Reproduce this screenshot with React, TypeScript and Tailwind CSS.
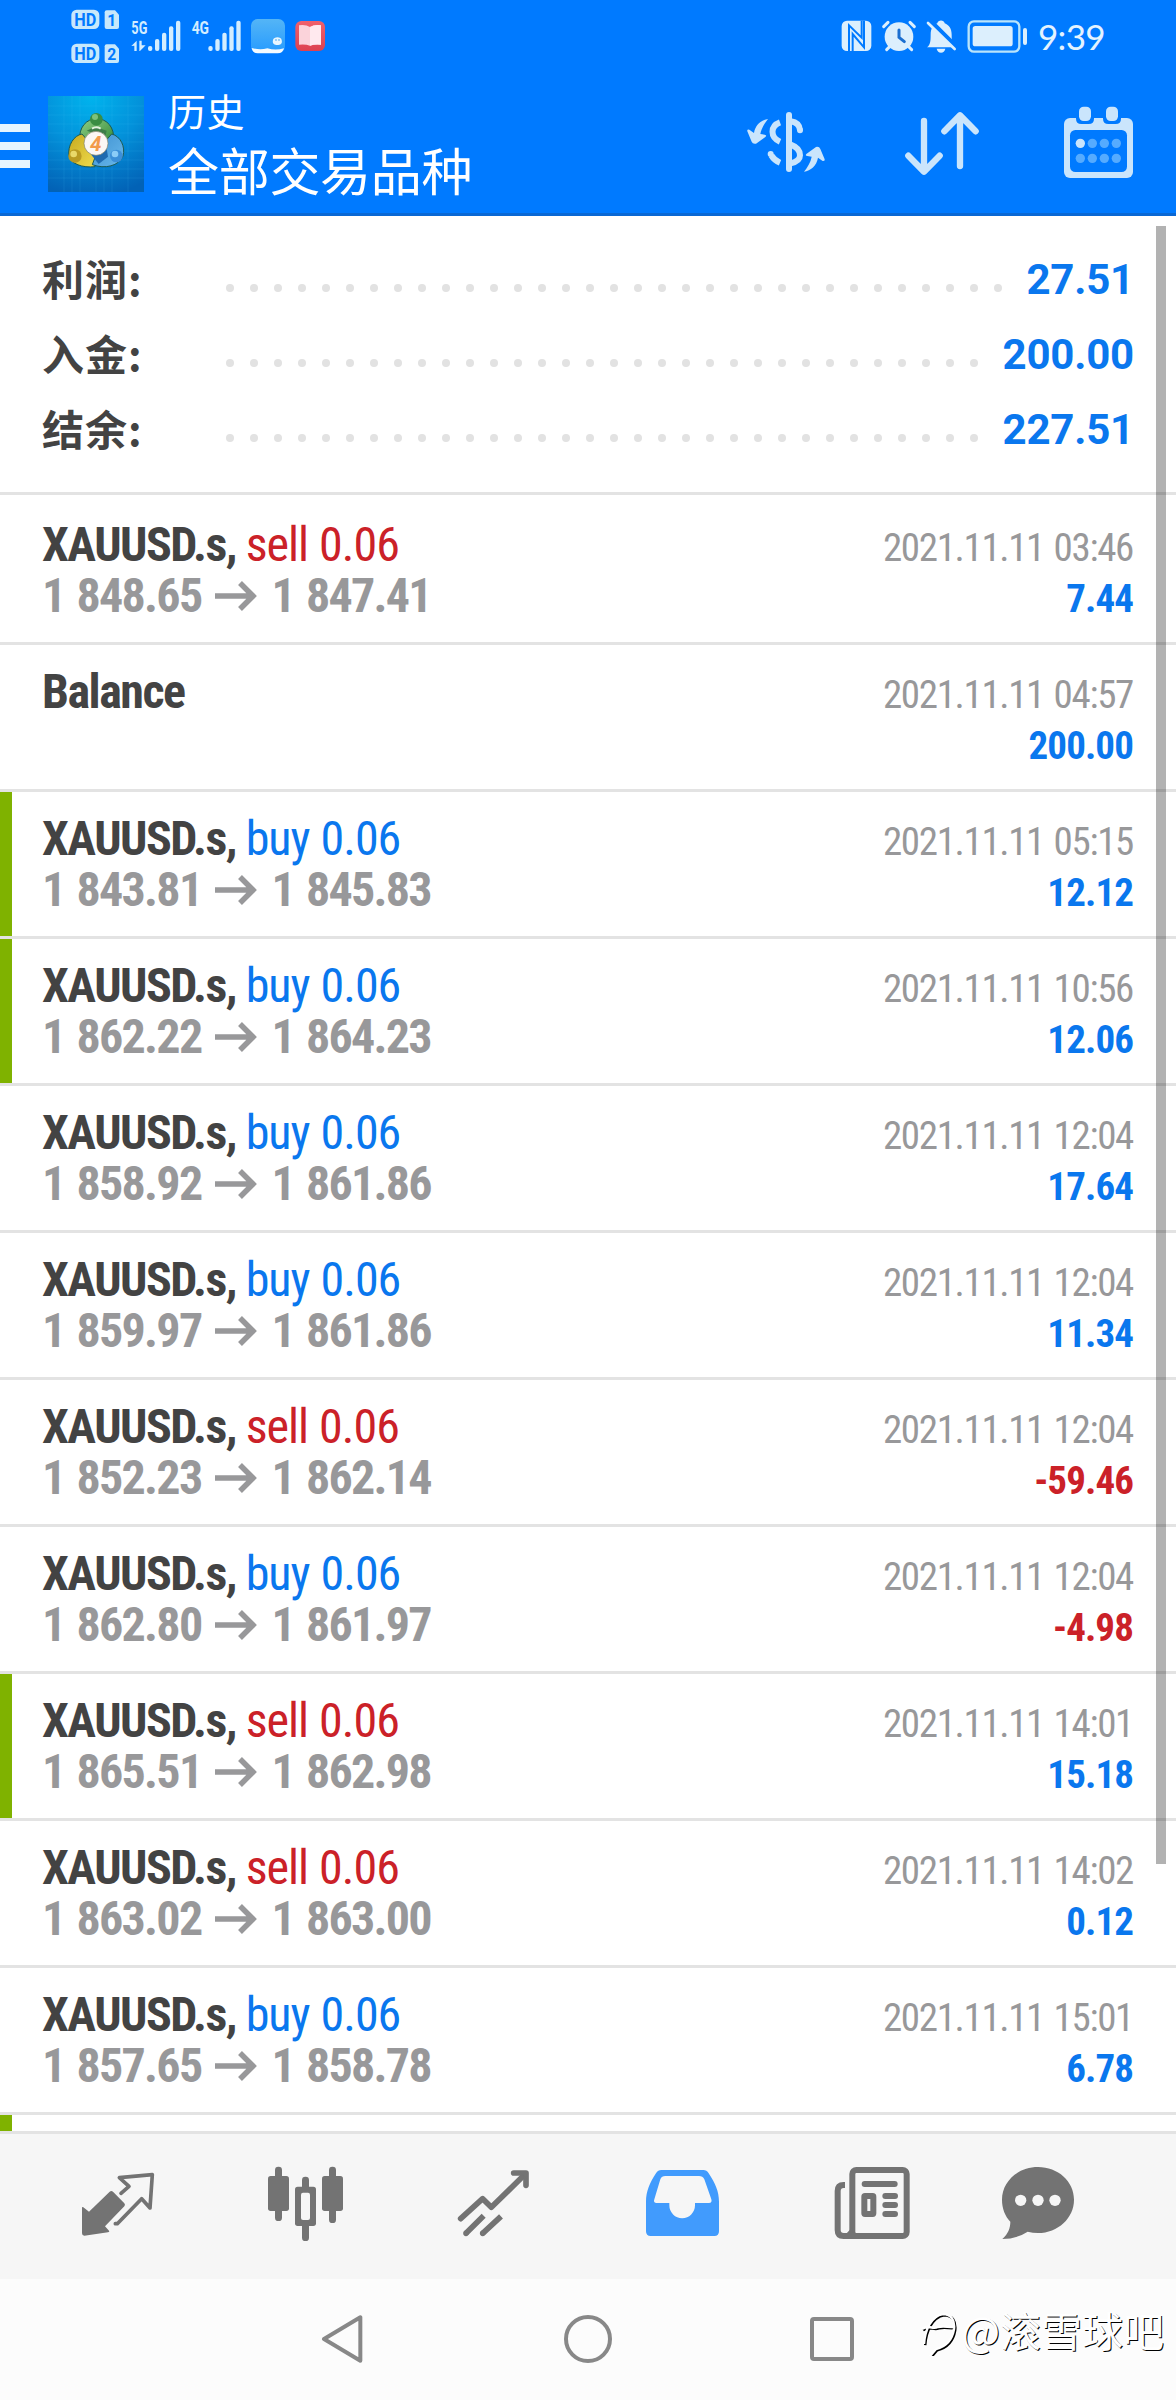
import { useState } from "react";
import clsx from "clsx";

interface Deal {
  symbol: string;
  side?: "buy" | "sell";
  volume?: string;
  open?: string;
  close?: string;
  time: string;
  profit: string;
  marked?: boolean;
}

const DEALS: Deal[] = [
  { symbol: "XAUUSD.s", side: "sell", volume: "0.06", open: "1 848.65", close: "1 847.41", time: "2021.11.11 03:46", profit: "7.44" },
  { symbol: "Balance", time: "2021.11.11 04:57", profit: "200.00" },
  { symbol: "XAUUSD.s", side: "buy", volume: "0.06", open: "1 843.81", close: "1 845.83", time: "2021.11.11 05:15", profit: "12.12", marked: true },
  { symbol: "XAUUSD.s", side: "buy", volume: "0.06", open: "1 862.22", close: "1 864.23", time: "2021.11.11 10:56", profit: "12.06", marked: true },
  { symbol: "XAUUSD.s", side: "buy", volume: "0.06", open: "1 858.92", close: "1 861.86", time: "2021.11.11 12:04", profit: "17.64" },
  { symbol: "XAUUSD.s", side: "buy", volume: "0.06", open: "1 859.97", close: "1 861.86", time: "2021.11.11 12:04", profit: "11.34" },
  { symbol: "XAUUSD.s", side: "sell", volume: "0.06", open: "1 852.23", close: "1 862.14", time: "2021.11.11 12:04", profit: "-59.46" },
  { symbol: "XAUUSD.s", side: "buy", volume: "0.06", open: "1 862.80", close: "1 861.97", time: "2021.11.11 12:04", profit: "-4.98" },
  { symbol: "XAUUSD.s", side: "sell", volume: "0.06", open: "1 865.51", close: "1 862.98", time: "2021.11.11 14:01", profit: "15.18", marked: true },
  { symbol: "XAUUSD.s", side: "sell", volume: "0.06", open: "1 863.02", close: "1 863.00", time: "2021.11.11 14:02", profit: "0.12" },
  { symbol: "XAUUSD.s", side: "buy", volume: "0.06", open: "1 857.65", close: "1 858.78", time: "2021.11.11 15:01", profit: "6.78" },
];

const SUMMARY = [
  { label: "利润:", value: "27.51", dots: 33 },
  { label: "入金:", value: "200.00", dots: 32 },
  { label: "结余:", value: "227.51", dots: 32 },
];

function SimBadges() {
  return (
    <svg className="h-[72px] w-[330px]" viewBox="0 0 990 216">
      {[0, 102].map((y, i) => (
        <g key={y}>
          <rect x="214" y={29 + y} width="84" height="58" rx="16" fill="#c8e8fb" />
          <text x="223" y={77 + y} textLength="66" lengthAdjust="spacingAndGlyphs" fontFamily="Roboto" fontWeight="700" fontSize="54" fill="#007aff">HD</text>
          <path d={`M320 ${31 + y}h25l12 13v37q0 6-6 6h-31q-6 0-6-6v-44q0-6 6-6z`} fill="#c8e8fb" />
          <text x="335" y={77 + y} textAnchor="middle" fontFamily="Roboto" fontWeight="700" fontSize="47" fill="#007aff">{i + 1}</text>
        </g>
      ))}
      <g fill="#d3edff">
        <text x="394" y="103" textLength="48" lengthAdjust="spacingAndGlyphs" fontFamily="Roboto" fontWeight="700" fontSize="56">5G</text>
        <text x="575" y="103" textLength="52" lengthAdjust="spacingAndGlyphs" fontFamily="Roboto" fontWeight="700" fontSize="56">4G</text>
        <path d="M394 138 410 122v31h-7v-16zM418 122h7v14h12l-17 17h-2z" />
        {[444, 625].map((x) => (
          <g key={x}>
            <rect x={x} y="138" width="13" height="15" rx="6" />
            <rect x={x + 21} y="117" width="13" height="36" rx="6" />
            <rect x={x + 42} y="98" width="13" height="55" rx="6" />
            <rect x={x + 63} y="79" width="13" height="74" rx="6" />
            <rect x={x + 84} y="62" width="13" height="91" rx="6" />
          </g>
        ))}
      </g>
      <defs>
        <linearGradient id="cloud" x1="0" y1="0" x2="0" y2="1">
          <stop offset="0" stopColor="#54b5f6" />
          <stop offset="1" stopColor="#269bff" />
        </linearGradient>
        <linearGradient id="book" x1="0" y1="0" x2="0" y2="1">
          <stop offset="0" stopColor="#f0606c" />
          <stop offset="1" stopColor="#dd4150" />
        </linearGradient>
      </defs>
      <rect x="753" y="57" width="102" height="102" rx="20" fill="url(#cloud)" />
      <path d="M755 144q25 7 47 1 25 7 50 0-3 15-19 15h-60q-15 0-18-16z" fill="#f4faff" />
      <path d="M819 120c2-11 25-11 26 0 3 12-4 15-13 15-8 0-16-3-13-15z" fill="#e8f6ff" />
      <circle cx="828" cy="120" r="2.5" fill="#3aa0ee" />
      <circle cx="837" cy="120" r="2.5" fill="#3aa0ee" />
      <rect x="886" y="63" width="89" height="90" rx="18" fill="url(#book)" />
      <path d="M897 76q20-3 33 5 13-8 33-5v58q-20-2-33 3-13-5-33-3z" fill="#fbd3da" />
      <path d="M930 81q13-8 33-5v58q-20-2-33 3z" fill="#ffe9ee" />
    </svg>
  );
}

function StatusIcons() {
  return (
    <svg className="h-[72px] w-[190px]" viewBox="360 0 570 216">
      <g fill="#dceffd">
        <rect x="365" y="62" width="89" height="91" rx="16" />
        <path d="M387 153V76L425 113V62M398 153V102L432 142V62" fill="none" stroke="#007aff" strokeWidth="6" />
        <circle cx="537" cy="110" r="43" />
        <path d="m491 80 13-13M570 67l13 13M500 149l9-9M575 149l-9-9" stroke="#dceffd" strokeWidth="9" strokeLinecap="round" />
        <path d="M537 90v22l16 13" fill="none" stroke="#1c6fd0" strokeWidth="9" strokeLinecap="round" />
        <path d="M621 142c10-8 11-18 11-38 0-18 7-29 20-34 2-11 20-11 22 0 13 5 21 16 21 34 0 20 1 30 11 38z" />
        <path d="M650 146h26q-3 12-13 12t-13-12z" />
        <path d="m622 54 92 92" stroke="#007aff" strokeWidth="14" />
        <path d="m624 69 80 78" stroke="#dceffd" strokeWidth="8" strokeLinecap="round" />
        <rect x="746" y="64" width="152" height="91" rx="16" fill="none" stroke="#b9e4fb" strokeWidth="7" />
        <rect x="758" y="78" width="120" height="61" rx="8" />
        <rect x="909" y="84" width="12" height="51" rx="6" />
      </g>
    </svg>
  );
}

function Logo() {
  return (
    <svg className="size-24" viewBox="144 288 288 288">
      <defs>
        <radialGradient id="sky" cx="0.45" cy="0" r="1.05">
          <stop offset="0" stopColor="#00b4ee" />
          <stop offset="0.5" stopColor="#0391da" />
          <stop offset="1" stopColor="#0262b6" />
        </radialGradient>
        <linearGradient id="green" x1="0" y1="0" x2="1" y2="1">
          <stop offset="0" stopColor="#8fcf86" />
          <stop offset="1" stopColor="#2c8431" />
        </linearGradient>
        <linearGradient id="gold" x1="0" y1="0" x2="1" y2="1">
          <stop offset="0" stopColor="#c7a91f" />
          <stop offset="1" stopColor="#f0dc4c" />
        </linearGradient>
        <linearGradient id="blue" x1="0" y1="0" x2="1" y2="1">
          <stop offset="0" stopColor="#3d8fd0" />
          <stop offset="1" stopColor="#69b9ec" />
        </linearGradient>
      </defs>
      <path d="M144 288h288v288H144z" fill="url(#sky)" />
      <path
        d="M144 318h288M144 345h288M144 372h288M144 399h288M144 426h288M144 453h288M144 480h288M144 507h288M144 534h288M192 288v288M216 288v288M240 288v288M288 288v288M312 288v288M336 288v288M384 288v288"
        stroke="#5cc4ff"
        strokeOpacity="0.12"
        strokeWidth="3"
      />
      <g stroke="#1d5a50" strokeWidth="3">
        <path d="M240 424c-6-42 20-68 50-68s56 26 50 68l-16 20h-68z" fill="url(#green)" />
        <path d="M246 402c-24 4-44 34-39 66 6 24 40 36 78 32l3-50z" fill="url(#gold)" />
        <path d="M335 402c26 6 42 38 34 66-12 30-54 40-92 26l16-44z" fill="url(#blue)" />
        <path d="m272 462 24 30 28-22-4-24z" fill="#1f6aaf" stroke="none" />
        <path d="m260 392 26-12 34 12-4 18z" fill="#3d7d48" stroke="none" />
      </g>
      <circle cx="289" cy="358" r="19" fill="#3a8d43" />
      <circle cx="285" cy="351" r="9" fill="#7cc17b" />
      <path d="M276 386q12-8 26 0" stroke="#e2f2df" strokeWidth="6" fill="none" />
      <circle cx="225" cy="468" r="20" fill="#b99a22" />
      <circle cx="221" cy="462" r="10" fill="#e9d86a" />
      <circle cx="349" cy="468" r="19" fill="#3c8fd8" />
      <circle cx="345" cy="462" r="10" fill="#8bccf7" />
      <circle cx="288" cy="430" r="36" fill="#fbf7f4" stroke="#7b7f63" strokeWidth="2" />
      <text x="287" y="452" textAnchor="middle" fontFamily="Roboto" fontStyle="italic" fontWeight="700" fontSize="62" fill="#f29a4c">4</text>
    </svg>
  );
}

function CurrencyIcon() {
  const arrow = "M144 357C124 360 106 375 102 399L88 389Q80 388 82 394L95 425Q98 433 108 431L136 411Q142 406 134 404L121 402C124 385 134 370 144 357Z";
  return (
    <svg className="h-36 w-24" viewBox="54 216 288 432" fill="none" stroke="#cae5fc" strokeWidth="18">
      <path d="M207 345v162" strokeLinecap="round" />
      <path d="M180 367C150 378 150 412 180 425M180 488Q163 481 154 466" />
      <circle cx="152" cy="462" r="9" fill="#cae5fc" stroke="none" />
      <path d="M212 364Q238 368 240 390" />
      <circle cx="240" cy="391" r="9" fill="#cae5fc" stroke="none" />
      <path d="M212 434C231 441 240 452 240 466S230 486 212 490" />
      <path d={arrow} fill="#cae5fc" stroke="none" />
      <path d={arrow} fill="#cae5fc" stroke="none" transform="rotate(180 198 436)" />
    </svg>
  );
}

function SortIcon() {
  return (
    <svg className="h-36 w-24" viewBox="522 216 288 432" fill="none" stroke="#cae5fc" strokeWidth="19" strokeLinecap="round" strokeLinejoin="round">
      <path d="M612 363v150M565 467l47 48 47-48M720 498V348M673 394l47-48 47 48" />
    </svg>
  );
}

function CalendarIcon() {
  return (
    <svg className="h-36 w-24" viewBox="990 216 288 432">
      <rect x="1032" y="354" width="207" height="180" rx="18" fill="#cae5fc" />
      <rect x="1050" y="390" width="171" height="126" rx="16" fill="#007aff" />
      {[1077, 1158].map((x) => (
        <g key={x}>
          <path d={`M${x - 9} 352h54v4q0 16-16 16h-22q-16 0-16-16z`} fill="#007aff" />
          <rect x={x} y="320" width="36" height="43" rx="14" fill="#cae5fc" />
        </g>
      ))}
      {[430, 475].map((y) =>
        [1081, 1117, 1153, 1189].map((x) => (
          <circle key={`${x}-${y}`} cx={x} cy={y} r="14" fill={x === 1081 && y === 430 ? "#cae5fc" : "#55abff"} />
        ))
      )}
    </svg>
  );
}

const TABS = [
  {
    id: "quotes",
    viewBox: "72 162 564 435",
    icon: (
      <>
        <path d="M246 383q0-4 4-1l17 13 62-60q5-4 10 0l34 35q4 5 0 9l-58 60 12 13q3 4-3 5l-71 10q-7 0-7-7z" fill="currentColor" />
        <path d="M363 340 387 319 358 293 457 284 450 384 425 356 352 431H346" fill="none" stroke="currentColor" strokeWidth="11" strokeLinecap="round" strokeLinejoin="round" />
      </>
    ),
  },
  {
    id: "chart",
    viewBox: "636 162 564 435",
    icon: (
      <g fill="currentColor">
        <rect x="825" y="260" width="21" height="163" rx="10" />
        <rect x="804" y="288" width="63" height="105" rx="8" />
        <rect x="987" y="260" width="21" height="169" rx="10" />
        <rect x="966" y="288" width="63" height="105" rx="8" />
        <rect x="906" y="290" width="21" height="193" rx="10" />
        <rect x="885" y="320" width="63" height="118" rx="8" />
        <rect x="903" y="338" width="27" height="82" rx="6" fill="#f6f6f6" />
      </g>
    ),
  },
  {
    id: "trade",
    viewBox: "0 42 564 435",
    icon: (
      <g fill="none" stroke="currentColor" strokeWidth="17" strokeLinejoin="round">
        <path d="m182 296 66-60 26 26 98-96" strokeLinecap="round" />
        <path d="M341 159h37v37" strokeLinecap="round" />
        <path d="M360 155h24v24z" fill="currentColor" stroke="none" />
        <path d="m198 340 53-53M248 340l55-51" />
        <circle cx="198" cy="340" r="4" strokeWidth="9" />
        <circle cx="248" cy="340" r="4" strokeWidth="9" />
      </g>
    ),
  },
  {
    id: "history",
    viewBox: "564 42 564 435",
    icon: (
      <>
        <path d="M784 150H910Q920 150 926 160C946 190 957 215 957 245V334Q957 348 943 348H752Q738 348 738 334V245C738 215 749 188 768 160Q774 150 784 150Z" fill="currentColor" />
        <path d="M796 168H897Q908 168 913 178L934 238Q937 249 927 249H885V256A38 38 0 0 1 808 256V249H770Q759 249 763 238L781 178Q785 168 796 168Z" fill="#f6f6f6" />
      </>
    ),
  },
  {
    id: "news",
    viewBox: "-12 102 564 435",
    icon: (
      <g fill="none" stroke="currentColor" strokeWidth="18">
        <rect x="217" y="210" width="163" height="198" rx="12" />
        <path d="M195 255h-4q-18 0-18 18v117q0 18 18 18h40" />
        <path d="M200 400h18V380z" fill="currentColor" stroke="none" />
        <path d="M254 252h90M316 288h29M316 315h29M316 342h29" strokeLinecap="round" />
        <rect x="253" y="288" width="27" height="54" rx="2" />
      </g>
    ),
  },
  {
    id: "chat",
    viewBox: "552 102 564 435",
    icon: (
      <>
        <path d="M774 201c60 0 108 43 108 98s-48 100-108 100q-16 0-31-4-34 22-76 22c18-16 24-34 24-52-16-17-25-40-25-66 0-55 48-98 108-98z" fill="currentColor" />
        <g fill="#f6f6f6">
          <circle cx="722" cy="301" r="17" />
          <circle cx="774" cy="301" r="17" />
          <circle cx="825" cy="301" r="17" />
        </g>
      </>
    ),
  },
];

function SummaryRow({ label, value, dots }: { label: string; value: string; dots: number }) {
  return (
    <div className="flex h-[75px] items-center pr-[42px] pl-[42px]">
      <span className="-mt-[5px] w-[176px] text-[42px] leading-[75px] font-bold tracking-[1px] text-[#434343]">{label}</span>
      <div className="mt-[17px] flex">
        {Array.from({ length: dots }, (_, i) => (
          <span key={i} className="mx-2 size-2 rounded-full bg-[#e2e2e2]" />
        ))}
      </div>
      <span className="ml-auto font-[Roboto] text-[42px] leading-[75px] font-bold tracking-[-0.2px] text-[#0a77ee]">{value}</span>
    </div>
  );
}

function DealRow({ deal }: { deal: Deal }) {
  return (
    <div
      className={clsx(
        "flex h-[147px] shrink-0 justify-between border-b-[3px] border-[#e3e3e3] pr-[43px] font-['Roboto_Condensed',Roboto] leading-[51px] [font-stretch:75%] first:h-[150px] first:pt-[3px]",
        deal.marked ? "pl-0" : "pl-[42px]"
      )}
    >
      <div className="flex">
        {deal.marked && <div className="mr-[30px] w-3 bg-[#7fb200]" />}
        <div className="pt-[21px] text-[48px] font-bold tracking-[-1.5px] whitespace-nowrap">
          <p className="text-[#434343]">
            {deal.symbol}
            {deal.side && (
              <>
                ,{" "}
                <span className={clsx("font-normal tracking-[-1px] [word-spacing:1px]", deal.side === "buy" ? "text-[#0a77ee]" : "text-[#cb2128]")}>
                  {deal.side} {deal.volume}
                </span>
              </>
            )}
          </p>
          {deal.open && (
            <p className="flex items-center tracking-[-1.7px] text-[#98989a] [word-spacing:2.5px]">
              {deal.open}
              <svg className="mr-3.5 ml-[14px] h-[30px] w-[42px]" viewBox="0 0 42 30" fill="none" stroke="currentColor" strokeWidth="5.5">
                <path d="M0 15h38M25 2l13 13-13 13" />
              </svg>
              {deal.close}
            </p>
          )}
        </div>
      </div>
      <div className="pt-[25px] text-right text-[39px]">
        <p className="tracking-[-1.35px] text-[#98989a] [word-spacing:2px]">{deal.time}</p>
        <p className={clsx("font-bold tracking-[-0.9px]", deal.profit.startsWith("-") ? "text-[#cb2128]" : "text-[#0a77ee]")}>{deal.profit}</p>
      </div>
    </div>
  );
}

export default function App() {
  const [tab, setTab] = useState("history");

  return (
    <div className="relative flex h-[2400px] w-[1176px] flex-col overflow-hidden bg-white font-['Noto_Sans_CJK_SC',sans-serif]">
      <header className="h-[216px] shrink-0 border-b-[3px] border-[#0a68d4] bg-[#007aff] text-white">
        <div className="flex h-[72px] items-center">
          <SimBadges />
          <div className="mr-[71px] ml-auto flex items-center">
            <StatusIcons />
            <span className="ml-2 w-[67px] font-[Lato] text-[35px] leading-[72px] tracking-[-0.7px] text-[#e4f3ff]">9:39</span>
          </div>
        </div>
        <div className="flex h-36 items-center">
          <button type="button" className="flex w-[30px] flex-col gap-2.5 pt-1" aria-label="Menu">
            <span className="h-2 bg-[#e6f5ff]" />
            <span className="h-2 bg-[#e6f5ff]" />
            <span className="h-2 bg-[#e6f5ff]" />
          </button>
          <div className="ml-[18px]">
            <Logo />
          </div>
          <div className="ml-6 flex flex-col pb-1.5">
            <span className="text-[38px] leading-[56px] tracking-[0.5px]">历史</span>
            <span className="text-[51px] leading-[62px] tracking-[-0.3px]">全部交易品种</span>
          </div>
          <div className="mr-[30px] ml-auto flex gap-[60px]">
            <CurrencyIcon />
            <SortIcon />
            <CalendarIcon />
          </div>
        </div>
      </header>

      <section className="h-[279px] shrink-0 border-b-[3px] border-[#e3e3e3] pt-[26px]">
        {SUMMARY.map((row) => (
          <SummaryRow key={row.label} {...row} />
        ))}
      </section>

      <main className="flex min-h-0 flex-1 flex-col overflow-hidden">
        {DEALS.map((deal, i) => (
          <DealRow key={i} deal={deal} />
        ))}
        <div className="h-4 w-3 shrink-0 bg-[#7fb200]" />
      </main>

      <nav className="flex h-[148px] shrink-0 border-t-[3px] border-[#e3e3e3] bg-[#f6f6f6] pl-6">
        {TABS.map((t) => (
          <button
            key={t.id}
            type="button"
            onClick={() => setTab(t.id)}
            className={clsx("w-[188px] shrink-0", tab === t.id ? "text-[#419bfd]" : "text-[#737373]")}
            aria-label={t.id}
          >
            <svg className="h-[145px] w-[188px]" viewBox={t.viewBox}>
              {t.icon}
            </svg>
          </button>
        ))}
      </nav>

      <div className="flex h-[121px] shrink-0 items-center justify-center gap-[196px] bg-[#fcfcfc] pb-0.5 text-[#888888]">
        <svg className="size-12" viewBox="-72 -72 144 144" fill="none" stroke="currentColor" strokeWidth="12" strokeLinejoin="round">
          <path d="M-60 0 49-65V65z" />
        </svg>
        <svg className="size-12" viewBox="-72 -72 144 144" fill="none" stroke="currentColor" strokeWidth="12">
          <circle r="66" />
        </svg>
        <svg className="size-12" viewBox="-72 -72 144 144" fill="none" stroke="currentColor" strokeWidth="12">
          <rect x="-60" y="-60" width="120" height="120" rx="6" />
        </svg>
      </div>

      <div className="absolute top-[226px] right-2.5 h-[1638px] w-2.5 bg-black/30" />

      <div className="absolute right-[12px] bottom-[43px] flex items-center">
        <svg className="mt-1.5 mr-0.5 h-12 w-10" viewBox="0 0 40 48" fill="none" strokeWidth="2.5">
          <path d="M5 36C6 22 12 8 24 6c8 0 12 6 11 15-2 12-10 18-18 20l-6 7M3 21c8-5 10 1 16-2 5-1 9 0 16 0" stroke="#000" transform="translate(1.2 1.2)" />
          <path d="M5 36C6 22 12 8 24 6c8 0 12 6 11 15-2 12-10 18-18 20l-6 7M3 21c8-5 10 1 16-2 5-1 9 0 16 0" stroke="#fff" />
        </svg>
        <span className="text-[41px] leading-[56px] text-white [text-shadow:1px_1px_0_#000]">@滚雪球吧</span>
      </div>
    </div>
  );
}
